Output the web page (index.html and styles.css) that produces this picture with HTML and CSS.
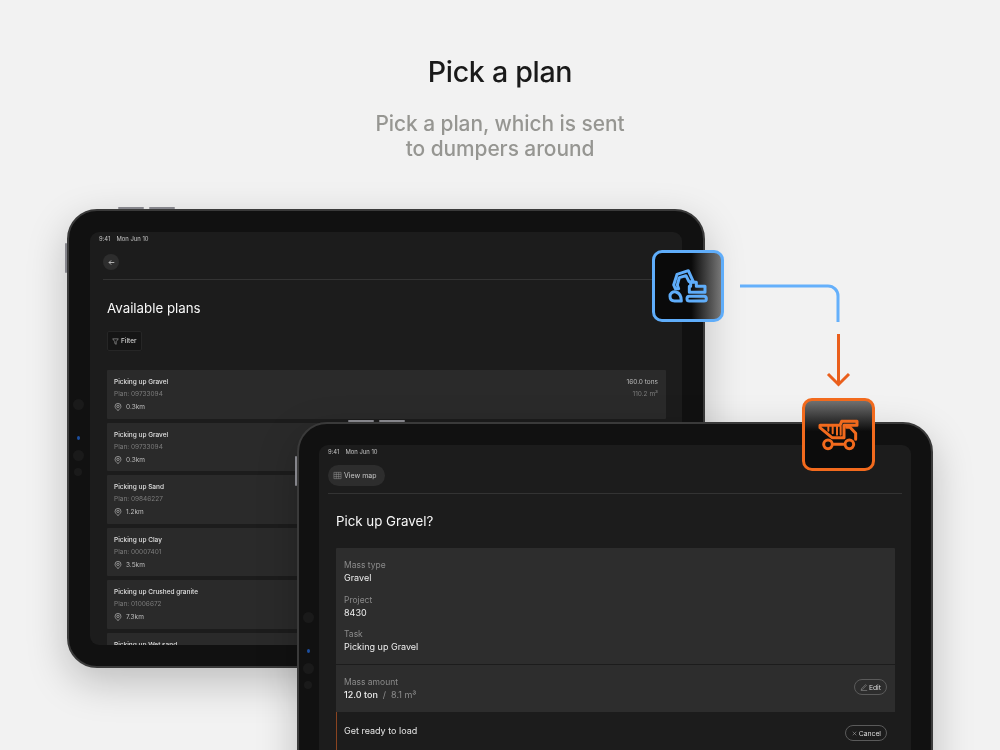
FILE: index.html
```html
<!DOCTYPE html>
<html lang="en">
<head>
<meta charset="utf-8">
<title>Pick a plan</title>
<link rel="stylesheet" href="styles.css">
</head>
<body>
<main class="stage">
  <header class="intro">
    <h1 class="intro-title">Pick a plan</h1>
    <p class="intro-sub">Pick a plan, which is sent<br>to dumpers around</p>
  </header>

  <section class="tablet tablet-back">
    <span class="key key-a"></span><span class="key key-b"></span><span class="key key-side"></span>
    <div class="cams"><i></i><i class="cam-blue"></i><i></i><i class="cam-small"></i></div>
    <div class="screen">
      <div class="status"><span>9:41</span><span>Mon Jun 10</span></div>
      <div class="nav">
        <span class="back"><svg viewBox="0 0 10 10" width="7" height="7"><path d="M9 5H1.5M4.5 2 1.500 5l3 3" fill="none" stroke="#c9c9c9" stroke-width="1.2"/></svg></span>
      </div>
      <div class="content-back">
        <h2 class="heading">Available plans</h2>
        <button class="filter"><svg viewBox="0 0 10 10" width="7" height="7"><path d="M1 1.2h8L6 5.2V9L4 7.8V5.2Z" fill="none" stroke="#b5b5b5" stroke-width=".8"/></svg>Filter</button>
        <div class="plans">
          <article class="plan">
            <div class="plan-main">
              <strong>Picking up Gravel</strong><span class="muted">Plan: 09733094</span>
              <span class="dist"><svg class="pin" viewBox="0 0 10 10" width="8" height="8"><use href="#pin"/></svg>0.3km</span>
            </div>
            <div class="plan-side"><span>160.0 tons</span><span class="muted">110.2 m³</span></div>
          </article>
          <article class="plan">
            <div class="plan-main">
              <strong>Picking up Gravel</strong><span class="muted">Plan: 09733094</span>
              <span class="dist"><svg class="pin" viewBox="0 0 10 10" width="8" height="8"><use href="#pin"/></svg>0.3km</span>
            </div>
          </article>
          <article class="plan">
            <div class="plan-main">
              <strong>Picking up Sand</strong><span class="muted">Plan: 09846227</span>
              <span class="dist"><svg class="pin" viewBox="0 0 10 10" width="8" height="8"><use href="#pin"/></svg>1.2km</span>
            </div>
          </article>
          <article class="plan">
            <div class="plan-main">
              <strong>Picking up Clay</strong><span class="muted">Plan: 00007401</span>
              <span class="dist"><svg class="pin" viewBox="0 0 10 10" width="8" height="8"><use href="#pin"/></svg>3.5km</span>
            </div>
          </article>
          <article class="plan">
            <div class="plan-main">
              <strong>Picking up Crushed granite</strong><span class="muted">Plan: 01006672</span>
              <span class="dist"><svg class="pin" viewBox="0 0 10 10" width="8" height="8"><use href="#pin"/></svg>7.3km</span>
            </div>
          </article>
          <article class="plan">
            <div class="plan-main"><strong>Picking up Wet sand</strong></div>
          </article>
        </div>
      </div>
    </div>
  </section>

  <section class="tablet tablet-front">
    <span class="key key-a"></span><span class="key key-b"></span><span class="key key-side"></span>
    <div class="cams"><i></i><i class="cam-blue"></i><i></i><i class="cam-small"></i></div>
    <div class="screen">
      <div class="status"><span>9:41</span><span>Mon Jun 10</span></div>
      <div class="nav nav-front">
        <span class="pill"><svg viewBox="0 0 10 10" width="9" height="9"><path d="M1 1.5h8v7H1ZM1 3.800h8M1 6.200h8M3.700 1.500v7M6.300 1.500v7" fill="none" stroke="#9a9a9a" stroke-width=".55"/></svg>View map</span>
      </div>
      <div class="content-front">
        <h2 class="heading heading-front">Pick up Gravel?</h2>
        <div class="card">
          <div class="fields">
            <div class="field"><span class="label">Mass type</span><span class="value">Gravel</span></div>
            <div class="field"><span class="label">Project</span><span class="value">8430</span></div>
            <div class="field"><span class="label">Task</span><span class="value">Picking up Gravel</span></div>
          </div>
          <div class="amount">
            <div class="field"><span class="label">Mass amount</span><span class="value"><b>12.0 ton</b><em>/</em><em>8.1 m³</em></span></div>
            <span class="chip"><svg viewBox="0 0 10 10" width="8" height="8"><path d="M2 7 7 2l1 1-5 5-1.500.5ZM1 9.300h8" fill="none" stroke="#9a9a9a" stroke-width=".7"/></svg>Edit</span>
          </div>
          <div class="ready">
            <span class="ready-text">Get ready to load</span>
            <span class="chip"><svg viewBox="0 0 10 10" width="7" height="7"><path d="m2.500 2.500 5 5m0-5-5 5" fill="none" stroke="#a5a5a5" stroke-width=".8"/></svg>Cancel</span>
          </div>
        </div>
      </div>
    </div>
  </section>

  <svg class="links" viewBox="0 0 150 150" width="150" height="150">
    <path d="M3 41H91a10 10 0 0 1 10 10V77" fill="none" stroke="#65b0fb" stroke-width="3"/>
    <path d="M101.500 89V139M91 129l10.500 10.500L112 129" fill="none" stroke="#ea5f1c" stroke-width="3"/>
  </svg>

  <div class="badge badge-blue">
    <svg viewBox="285 69 198 198" width="66" height="66">
      <g fill="none" stroke="#5fadfa" stroke-width="9" stroke-linejoin="round" stroke-linecap="round">
        <path d="M346 176 341 165 351 133 385 122 400 155H387L378 137 358 143 352 165 356 176Z"/>
        <path d="M348 186c-10-2-18 4-18 13s6 14 14 14h20c0-13-6-24-16-27Z"/>
        <path d="M392 157h17v12h26v18h-47v-18h4Z"/>
        <rect x="381" y="199" width="58" height="14" rx="7"/>
      </g>
    </svg>
  </div>

  <div class="badge badge-orange">
    <svg viewBox="45 33 201 201" width="67" height="67">
      <g fill="none" stroke="#f26a1d" stroke-linejoin="round" stroke-linecap="round">
        <g stroke-width="9">
          <path d="M90 106H150L155 94H201V106H162V143H126L90 113Z"/>
          <path d="M170 112H180L197 130V148"/>
          <circle cx="114" cy="163" r="13"/><circle cx="178" cy="163" r="13"/>
          <path d="M132 163H160"/>
        </g>
        <path stroke-width="6" d="M115 110V122M128 110V130M141 110V134M152 110V134"/>
      </g>
    </svg>
  </div>

  <svg class="defs" width="0" height="0" aria-hidden="true">
    <symbol id="pin" viewBox="0 0 10 10">
      <path d="M5 9.500C3 7.700 1.300 6 1.300 4.200a3.700 3.700 0 0 1 7.400 0C8.700 6 7 7.700 5 9.500Z" fill="none" stroke="#c4c4c4" stroke-width=".8"/>
      <circle cx="5" cy="4.200" r="1.500" fill="none" stroke="#c4c4c4" stroke-width=".8"/>
    </symbol>
  </svg>
</main>
</body>
</html>
```
FILE: styles.css
```css
* { box-sizing: border-box; }
html, body { margin: 0; height: 100%; }
body { background: #f2f2f2; font-family: Inter, "Liberation Sans", sans-serif; overflow: hidden; }
.stage { position: relative; width: 1000px; height: 750px; overflow: hidden; }

.intro { display: flex; flex-direction: column; align-items: center; padding-top: 55px; text-align: center; filter: blur(.25px); }
.intro-title { margin: 0; font-size: 28.600px; line-height: 34px; font-weight: 500; letter-spacing: -.3px; color: #1a1a1a; }
.intro-sub { margin: 22px 0 0; font-size: 20.900px; line-height: 25px; font-weight: 500; color: #969692; letter-spacing: -.05px; }

.tablet { position: absolute; border-radius: 30px; background: #111; border: 2px solid #3a3a3a; box-shadow: 0 14px 40px rgba(0,0,0,.22); padding: 21px; }
.tablet-back { left: 67px; top: 209px; width: 638px; height: 459px; }
.tablet-front { left: 297px; top: 422px; width: 636px; height: 460px; padding: 21px 20px; }

.key { position: absolute; background: #85858b; border-radius: 1px; }
.key-a { top: -4px; left: 49px; width: 26px; height: 2px; }
.key-b { top: -4px; left: 80px; width: 26px; height: 2px; }
.key-side { left: -4px; top: 32px; width: 2px; height: 30px; }

.cams { position: absolute; left: 3px; top: 188px; width: 12px; display: flex; flex-direction: column; align-items: center; gap: 7px; }
.cams i { display: block; width: 11px; height: 11px; border-radius: 50%; background: #1a1a1a; }
.cams .cam-small { width: 8px; height: 8px; }
.cams .cam-blue { width: 3px; height: 4px; margin: 19px 0 3px; background: #1c4fa0; }

.screen { height: 100%; background: #1c1c1c; border-radius: 9px; overflow: hidden; color: #e8e8e8; filter: blur(.35px); }

.status { display: flex; gap: 6px; padding: 3px 9px 0; font-size: 5.900px; line-height: 8px; color: #c4c4c4; }
.nav { margin: 11px 11px 0 13px; height: 26px; display: flex; align-items: flex-start; border-bottom: 1px solid #333; }
.back { width: 16px; height: 16px; border-radius: 50%; background: #2d2d2d; display: flex; align-items: center; justify-content: center; }
.nav-front { margin: 9px 9px 0 9px; height: 29px; }
.pill { height: 21px; padding: 0 8px 0 5px; border-radius: 11px; background: #2d2d2d; display: flex; align-items: center; gap: 2px; font-size: 7px; color: #c5c5c5; }

.content-back { padding: 19px 16px 0 17px; }
.content-front { padding: 18px 16px 0 17px; }
.heading { margin: 0; font-size: 13.300px; line-height: 18px; font-weight: 400; color: #f8f8f8; }
.heading-front { line-height: 18px; }

.filter { margin-top: 14px; height: 20px; width: 35px; padding: 0 0 0 4px; display: flex; align-items: center; gap: 2px; font: 500 6.400px Inter, sans-serif; color: #d2d2d2; background: #151515; border: 1px solid #262626; border-radius: 2px; }

.plans { margin-top: 19px; display: flex; flex-direction: column; gap: 4px; }
.plan { height: 48.500px; padding: 8px 8px 0 7px; display: flex; justify-content: space-between; background: #2a2a2a; border-radius: 1px; flex: none; }
.plan-main { display: flex; flex-direction: column; align-items: flex-start; font-size: 6.500px; line-height: 8px; gap: 4px; }
.plan-main strong { font-weight: 500; color: #e0e0e0; }
.muted { color: #7c7c7c; }
.dist { display: flex; align-items: center; gap: 4px; color: #bdbdbd; margin-top: 1px; }
.plan-side { display: flex; flex-direction: column; align-items: flex-end; font-size: 6.500px; line-height: 8px; gap: 4px; color: #bdbdbd; }

.card { margin-top: 18px; background: #2d2d2d; border-radius: 1px 1px 0 0; }
.fields { height: 117px; padding: 12px 8px 0; display: flex; flex-direction: column; gap: 10.500px; border-bottom: 1px solid #1c1c1c; }
.field { display: flex; flex-direction: column; gap: 1px; }
.label { font-size: 8.500px; line-height: 11px; color: #8a8a8a; }
.value { font-size: 9px; line-height: 12px; color: #eee; font-weight: 400; display: flex; gap: 5px; }
.value b { font-weight: 500; }
.value em { font-style: normal; color: #8d8d8d; }
.amount { height: 47px; padding: 12px 8px 0; display: flex; justify-content: space-between; }
.chip { height: 16px; padding: 0 5px; display: inline-flex; align-items: center; gap: 1px; font-size: 6.800px; color: #ddd; border: 1px solid #5a5a5a; border-radius: 8px; margin-top: 2px; }
.ready { height: 60px; padding: 11px 8px 0 7px; display: flex; justify-content: space-between; background: #1c1c1c; border-left: 1px solid #8a4420; }
.ready-text { font-size: 9px; line-height: 16px; color: #e5e5e5; }

.links { position: absolute; left: 737px; top: 245px; }
.badge { position: absolute; width: 72px; height: 72px; border-radius: 10px; display: flex; align-items: center; justify-content: center; }
.badge-blue { left: 652px; top: 250px; border: 3px solid #5fadfa; background: linear-gradient(90deg, #0a0a0a 55%, #777 100%); }
.badge-orange { left: 802px; top: 398px; width: 73px; height: 73px; border: 3px solid #f26a1d; background: linear-gradient(180deg, #707070 0%, #0c0c0c 45%); }
.defs { position: absolute; }
```
